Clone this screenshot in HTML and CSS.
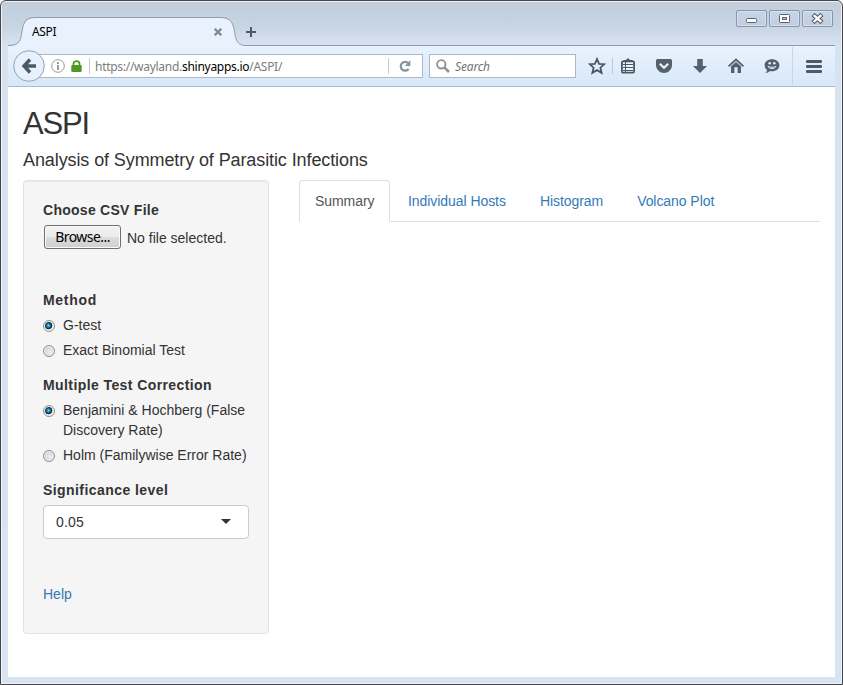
FILE: index.html
```
<!DOCTYPE html>
<html lang="en">
<head>
<meta charset="utf-8">
<title>ASPI</title>
<link rel="stylesheet" href="styles.css">
</head>
<body>
<div class="window">
  <header class="titlebar">
    <div class="tab">
      <svg class="tab-shape" width="238" height="29" viewBox="0 0 238 29">
        <path d="M0 28.5C9 28.5 12.5 25.500 13.500 17.500C15 6.500 16.500.5 27.500.5H212C223 .5 225.500 6 227 17C228 25 231 28.500 238 28.500V29H0Z" fill="#e9f2fc"/>
        <path d="M0 28.500C9 28.500 12.500 25.500 13.500 17.500C15 6.500 16.500.5 27.500.5H212C223 .5 225.500 6 227 17C228 25 231 28.500 238 28.500" fill="none" stroke="#8b9bb0"/>
      </svg>
      <span class="tab-title">ASPI</span>
      <svg class="tab-close" width="8" height="8" viewBox="0 0 8 8"><path d="M.7 .7L7.300 7.300M7.300 .7L.7 7.300" stroke="#7c8d9b" stroke-width="2.300"/></svg>
    </div>
    <svg class="new-tab" width="11" height="11" viewBox="0 0 11 11"><path d="M5 0V10M0 5H10" stroke="#4b5a68" stroke-width="2"/></svg>
    <div class="controls">
      <span class="control"><svg width="31" height="17" viewBox="0 0 31 17"><rect x="10.500" y="8.500" width="10" height="4" rx="1" fill="#fff" stroke="#5a6070"/></svg></span>
      <span class="control"><svg width="31" height="17" viewBox="0 0 31 17"><rect x="10.500" y="4.500" width="10" height="8" rx="1" fill="#fff" stroke="#5a6070"/><rect x="13.500" y="7.500" width="4" height="2" fill="#c5d3e4" stroke="#5a6070"/></svg></span>
      <span class="control"><svg width="31" height="17" viewBox="0 0 31 17"><path d="M11 4.500L20 12.500M20 4.500L11 12.500" stroke="#5a6070" stroke-width="4.400"/><path d="M11.700 5.100L19.300 11.900M19.300 5.100L11.700 11.900" stroke="#fff" stroke-width="2.300"/></svg></span>
    </div>
  </header>
  <nav class="toolbar">
    <div class="back"><svg width="32" height="32" viewBox="0 0 32 32"><circle cx="16" cy="16" r="15.300" fill="#e8f1fb" stroke="#8fa3b9"/><path d="M17 9.500L11 16L17 22.500M11.500 16H23" fill="none" stroke="#4a5966" stroke-width="3.400"/></svg></div>
    <div class="address">
      <svg class="info" width="14" height="14" viewBox="0 0 14 14"><circle cx="7" cy="7" r="6.300" fill="none" stroke="#999"/><path d="M7 3V5M7 6V11" stroke="#929292" stroke-width="1.800"/></svg>
      <svg class="lock" width="11" height="12" viewBox="0 0 11 12"><path d="M2.500 6V3.800C2.500 .2 8.500 .2 8.500 3.800V6" fill="none" stroke="#4c9a25" stroke-width="1.800"/><rect x=".3" y="5" width="10.400" height="7" rx="1" fill="#4c9a25"/></svg>
      <span class="divider"></span>
      <span class="url">https://wayland.<b>shinyapps.io</b>/ASPI/</span>
      <span class="divider reload-divider"></span>
      <svg class="reload" width="12" height="12" viewBox="0 0 12 12"><path d="M9.400 3.300A4.400 4.400 0 1 0 9.600 9" fill="none" stroke="#8395a2" stroke-width="2.200"/><path d="M11.300 0V6H5.800Z" fill="#8395a2"/></svg>
    </div>
    <div class="search">
      <svg width="14" height="14" viewBox="0 0 14 14"><circle cx="5.300" cy="5.300" r="4.200" fill="none" stroke="#929292" stroke-width="1.900"/><path d="M8.300 8.300L13 13" stroke="#929292" stroke-width="2.600"/></svg>
      <span>Search</span>
    </div>
    <div class="tools">
      <svg width="18" height="18" viewBox="0 0 18 18"><path d="M9 2L11.100 6.800L16.200 7.200L12.400 10.700L13.600 15.800L9 13.100L4.400 15.800L5.600 10.700L1.800 7.200L6.900 6.800Z" fill="none" stroke="#4a5763" stroke-width="1.800"/></svg>
      <span class="divider star-divider"></span>
      <svg class="list" width="18" height="18" viewBox="0 0 18 18"><rect x="2.900" y="4.400" width="12.200" height="11.200" rx="1.200" fill="#e8f2fc" stroke="#4a5763" stroke-width="1.800"/><path d="M4.500 4.500V3H7L9 1L11 3H13.500V4.500Z" fill="#4a5763"/><path d="M4 7.500H14M4 10.500H14M4 13.500H14" stroke="#4a5763"/><path d="M6.500 5V15" stroke="#4a5763"/></svg>
      <svg width="18" height="18" viewBox="0 0 18 18"><path d="M2.500 2H15.500Q17 2 17 3.500V8C17 12.500 13 16 9 16C5 16 1 12.500 1 8V3.500Q1 2 2.500 2Z" fill="#54616d"/><path d="M4.800 6.700L9 10.700L13.200 6.700" fill="none" stroke="#eef5fc" stroke-width="2.200"/></svg>
      <svg width="18" height="18" viewBox="0 0 18 18"><path d="M6.200 2H11.800V9H16L9 16L2 9H6.200Z" fill="#54616d"/></svg>
      <svg width="18" height="18" viewBox="0 0 18 18"><path d="M1.500 9.300L9 2.500L16.500 9.300" fill="none" stroke="#54616d" stroke-width="1.800"/><path d="M4 9.300L9 4.900L14 9.300V16H10.600V10.300H7.400V16H4Z" fill="#54616d"/></svg>
      <svg width="18" height="18" viewBox="0 0 18 18"><path d="M9 2.200C13.300 2.200 16.400 4.500 16.400 8.300S13.200 14.300 9 14.300Q8 14.300 7 14.100Q5.300 16 2.500 16Q4.100 14.600 4 13.100Q1.600 11.500 1.600 8.300C1.600 4.500 4.700 2.200 9 2.200Z" fill="#54616d"/><path d="M4.500 8.900C6 12.900 12 12.900 13.500 8.900Z" fill="#e8f2fc"/><path d="M6 9.800H12" stroke="#54616d"/><circle cx="6.700" cy="6.200" r="1.300" fill="#e8f2fc"/><circle cx="11.300" cy="6.200" r="1.300" fill="#e8f2fc"/></svg>
      <span class="menu-divider"></span>
      <svg class="menu" width="16" height="13" viewBox="0 0 16 13"><path d="M1.300 1.500H14.700M1.300 6.500H14.700M1.300 11.500H14.700" stroke="#4d5964" stroke-width="2.800" stroke-linecap="round"/></svg>
    </div>
  </nav>
  <main class="page">
    <h1>ASPI</h1>
    <h4>Analysis of Symmetry of Parasitic Infections</h4>
    <div class="columns">
      <form class="well">
        <div class="label file-label">Choose CSV File</div>
        <div class="file-row"><button type="button">Browse...</button><span>No file selected.</span></div>
        <div class="label method-label">Method</div>
        <label class="option"><i class="radio checked"></i><span>G-test</span></label>
        <label class="option"><i class="radio"></i><span>Exact Binomial Test</span></label>
        <div class="label correction-label">Multiple Test Correction</div>
        <label class="option"><i class="radio checked"></i><span>Benjamini &amp; Hochberg (False<br>Discovery Rate)</span></label>
        <label class="option"><i class="radio"></i><span>Holm (Familywise Error Rate)</span></label>
        <div class="label level-label">Significance level</div>
        <div class="select"><span>0.05</span><i class="caret"></i></div>
        <a class="help">Help</a>
      </form>
      <div class="tabs">
        <a class="active">Summary</a><a>Individual Hosts</a><a>Histogram</a><a>Volcano Plot</a>
      </div>
    </div>
  </main>
</div>
</body>
</html>
```
FILE: styles.css
```
* { box-sizing: border-box; }
body { margin: 0; background: #fff; overflow: hidden; }
svg { display: block; flex: none; }
.window {
  width: 843px; height: 685px;
  display: flex; flex-direction: column;
  padding: 0 7px 7px;
  border: 1px solid #454549;
  border-radius: 6px 6px 0 0;
  background: linear-gradient(#c1cddb, #c7d4e1 25px, #d7e3f0 45px, #d8e4f1);
  box-shadow: inset 0 0 0 1px #edf4fb;
  font: 12px "Noto Sans", sans-serif;
}
.titlebar { height: 45px; flex: none; display: flex; align-items: flex-start; background: linear-gradient(#8b9bb0, #8b9bb0) bottom / 100% 1px no-repeat; }
.tab { position: relative; width: 238px; height: 29px; margin-top: 16px; display: flex; align-items: center; }
.tab-shape { position: absolute; left: 0; top: 0; }
.tab-title { position: relative; margin-left: 24px; color: #000; line-height: 16px; letter-spacing: -0.35px; }
.tab-close { position: relative; margin-left: auto; margin-right: 24px; margin-top: 1px; }
.new-tab { margin: 26px 0 0 0; }
.controls { display: flex; gap: 2px; margin: 9px 2px 0 auto; }
.control { width: 31px; height: 17px; border: 1px solid #8694b0; border-radius: 2px; background: linear-gradient(#c8d5e4, #bfcddd); box-shadow: inset 0 0 0 1px #d7e2ee; }
.control svg { margin: -1px; }
.toolbar { height: 41px; flex: none; display: flex; align-items: center; background: linear-gradient(#e9f2fc, #d8e8f8); border-bottom: 1px solid #a5bdd4; }
.back { position: relative; z-index: 1; margin-left: 5px; width: 32px; height: 32px; }
.address, .search { height: 24px; border: 1px solid #a9b9cc; background: #fff; display: flex; align-items: center; }
.address { width: 386px; margin-left: -8px; padding-left: 14px; border-left: 0; border-radius: 0 1px 1px 0; }
.lock { margin-left: 6px; margin-top: -1px; }
.divider { width: 1px; height: 16px; background: #c9ccd0; margin-left: 7px; }
.url { margin-left: 5px; padding-top: 2px; color: #7c7c7c; white-space: nowrap; line-height: 18px; letter-spacing: -0.28px; }
.url b { color: #000; font-weight: 400; }
.reload-divider { margin-left: auto; }
.reload { margin: 0 11px 0 10px; }
.search { width: 147px; margin-left: 6px; padding-left: 6px; color: #737373; font-style: italic; letter-spacing: -0.15px; }
.search span { margin-left: 5px; padding-top: 1px; }
.tools { display: flex; align-items: center; flex: 1; height: 40px; padding-left: 12px; gap: 18px; }
.star-divider { margin: 0 0 0 -12px; background: #b9c9db; }
.list { margin-left: -12px; }
.menu-divider { width: 1px; height: 38px; margin-left: -7px; margin-right: -5px; background: #c7d7e8; }
.page { flex: 1; background: #fff; padding: 19px 15px 0; font: 14px/20px "Liberation Sans", sans-serif; color: #333; }
h1 { margin: 0; font-size: 31px; line-height: 35px; font-weight: 400; letter-spacing: -1.2px; }
h4 { margin: 9px 0 10px; font-size: 18px; line-height: 20px; font-weight: 400; letter-spacing: -0.1px; }
.columns { display: flex; gap: 30px; align-items: flex-start; }
.well { width: 246px; height: 454px; padding: 19px; border: 1px solid #e3e3e3; border-radius: 4px; background: #f5f5f5; box-shadow: inset 0 1px 1px rgba(0, 0, 0, .05); }
.label { font-weight: 700; line-height: 20px; }
.file-label { letter-spacing: .27px; }
.file-row { display: flex; align-items: center; height: 24px; margin: 5px 0 0 1px; gap: 6px; }
.file-row span { padding-top: 2px; }
button { width: 77px; height: 24px; padding: 0; border: 1px solid #707070; border-radius: 3px; background: linear-gradient(#f3f3f3, #ebebeb 50%, #dcdcdc 51%, #cfcfcf); box-shadow: inset 0 0 0 1px #fafafa; font: 14px/20px "Noto Sans", sans-serif; letter-spacing: -0.55px; color: #000; }
.method-label { margin-top: 41px; letter-spacing: .7px; }
.option { display: flex; align-items: flex-start; margin-top: 5px; white-space: nowrap; }
.radio { width: 12px; height: 12px; margin: 5px 8px 0 0; flex: none; border: 1px solid #8e8f8f; border-radius: 50%; background: radial-gradient(circle at 60% 60%, #f0f0f0, #cfd1d4 70%); box-shadow: inset 0 0 0 1px #f4f4f4; }
.checked { background: radial-gradient(circle at 45% 45%, #8bd5f2 0, #2587b2 1.500px, #12364f 3px, #183b52 3.500px, #eee 4.200px); }
.correction-label { margin-top: 15px; letter-spacing: .41px; }
.level-label { margin-top: 15px; letter-spacing: .43px; }
.select { width: 206px; height: 34px; margin-top: 5px; padding: 0 17px 0 12px; border: 1px solid #ccc; border-radius: 4px; background: #fff; display: flex; align-items: center; justify-content: space-between; }
.select span { letter-spacing: .2px; }
.caret { border: 5px solid transparent; border-top-color: #333; border-bottom: 0; margin-top: -2px; }
.help { display: block; margin-top: 45px; color: #337ab7; }
.tabs { width: 521px; height: 42px; display: flex; gap: 2px; border-bottom: 1px solid #ddd; }
.tabs a { height: 42px; padding: 10px 15px; border: 1px solid transparent; border-radius: 4px 4px 0 0; color: #337ab7; white-space: nowrap; letter-spacing: -0.06px; }
.tabs .active { width: 91px; color: #555; background: #fff; border-color: #ddd #ddd #fff; }
```
